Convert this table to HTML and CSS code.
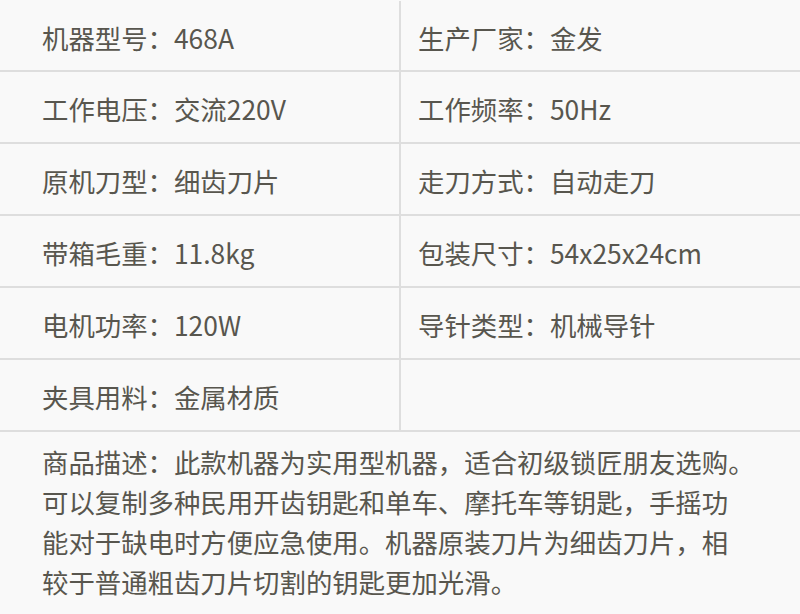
FILE: index.html
```html
<!DOCTYPE html>
<html lang="zh-CN">
<head>
<meta charset="utf-8">
<link rel="stylesheet" href="styles.css">
</head>
<body>
<div class="spec">
  <div class="row first">
    <div class="cell left">机器型号：468A</div>
    <div class="cell right">生产厂家：金发</div>
  </div>
  <div class="row">
    <div class="cell left">工作电压：交流220V</div>
    <div class="cell right">工作频率：50Hz</div>
  </div>
  <div class="row">
    <div class="cell left">原机刀型：细齿刀片</div>
    <div class="cell right">走刀方式：自动走刀</div>
  </div>
  <div class="row">
    <div class="cell left">带箱毛重：11.8kg</div>
    <div class="cell right">包装尺寸：54x25x24cm</div>
  </div>
  <div class="row">
    <div class="cell left">电机功率：120W</div>
    <div class="cell right">导针类型：机械导针</div>
  </div>
  <div class="row">
    <div class="cell left">夹具用料：金属材质</div>
    <div class="cell right"></div>
  </div>
  <div class="desc">商品描述：此款机器为实用型机器，适合初级锁匠朋友选购。<br>可以复制多种民用开齿钥匙和单车、摩托车等钥匙，手摇功<br>能对于缺电时方便应急使用。机器原装刀片为细齿刀片，相<br>较于普通粗齿刀片切割的钥匙更加光滑。</div>
</div>
</body>
</html>
```
FILE: styles.css
```css
html, body {
  margin: 0;
  padding: 0;
  background: #f9f9f9;
}
body {
  font-family: "Noto Sans CJK SC", "Noto Sans", sans-serif;
  color: #58564e;
  font-size: 26.4px;
  width: 800px;
  height: 614px;
  overflow: hidden;
}
.spec {
  display: flex;
  flex-direction: column;
}
.row {
  display: grid;
  grid-template-columns: 401px 1fr;
  height: 70px;
  border-bottom: 2px solid #dedede;
}
.row.first {
  height: 69px;
  padding-top: 1px;
}
.cell {
  display: flex;
  align-items: center;
  padding-top: 5px;
  line-height: 1;
  white-space: nowrap;
}
.cell.left {
  padding-left: 42px;
  border-right: 2px solid #dedede;
}
.cell.right {
  padding-left: 17px;
}
.desc {
  padding: 10px 0 0 42px;
  line-height: 40px;
  white-space: nowrap;
}
```
